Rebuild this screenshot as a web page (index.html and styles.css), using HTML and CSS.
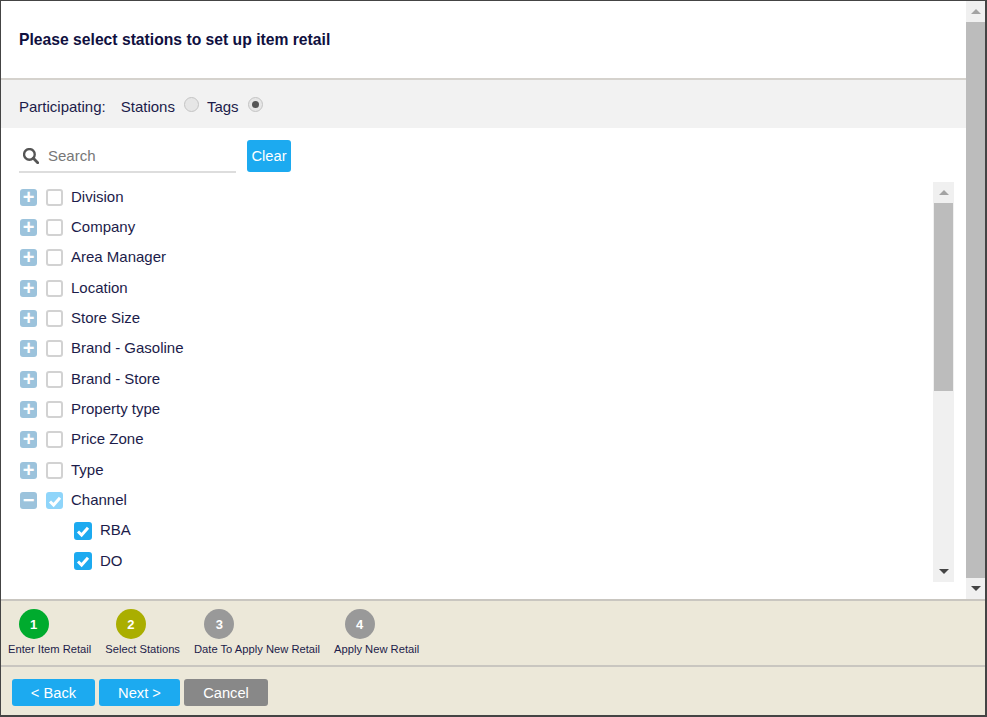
FILE: index.html
```html
<!DOCTYPE html>
<html lang="en">
<head>
<meta charset="utf-8">
<title>Select stations</title>
<link rel="stylesheet" href="styles.css">
</head>
<body>
<div class="window">
  <div class="upper">
    <main class="main">
      <header class="title-bar"><h1>Please select stations to set up item retail</h1></header>
      <div class="participating">
        <span class="part-label">Participating:</span>
        <span class="part-opt">Stations</span><span class="radio"></span>
        <span class="part-opt tags">Tags</span><span class="radio on"></span>
      </div>
      <div class="search-row">
        <div class="search">
          <svg class="search-icon" viewBox="0.8 0.8 15 15" width="16" height="16"><circle cx="6.8" cy="6.8" r="5" fill="none" stroke="#555" stroke-width="2.2"/><path d="M10.5 10.5 L14.6 14.6" stroke="#555" stroke-width="2.6" stroke-linecap="round"/></svg>
          <span class="placeholder">Search</span>
        </div>
        <button class="btn blue clear">Clear</button>
      </div>
      <div class="tree-wrap">
        <ul class="tree">
          <li class="row"><span class="exp">+</span><span class="cb"></span><span class="label">Division</span></li>
          <li class="row"><span class="exp">+</span><span class="cb"></span><span class="label">Company</span></li>
          <li class="row"><span class="exp">+</span><span class="cb"></span><span class="label">Area Manager</span></li>
          <li class="row"><span class="exp">+</span><span class="cb"></span><span class="label">Location</span></li>
          <li class="row"><span class="exp">+</span><span class="cb"></span><span class="label">Store Size</span></li>
          <li class="row"><span class="exp">+</span><span class="cb"></span><span class="label">Brand - Gasoline</span></li>
          <li class="row"><span class="exp">+</span><span class="cb"></span><span class="label">Brand - Store</span></li>
          <li class="row"><span class="exp">+</span><span class="cb"></span><span class="label">Property type</span></li>
          <li class="row"><span class="exp">+</span><span class="cb"></span><span class="label">Price Zone</span></li>
          <li class="row"><span class="exp">+</span><span class="cb"></span><span class="label">Type</span></li>
          <li class="row"><span class="exp minus">−</span><span class="cb partial"><svg viewBox="0 0 18 18" width="18" height="18"><path d="M4 9.5 L7.6 13 L14 5.8" fill="none" stroke="#fff" stroke-width="3"/></svg></span><span class="label">Channel</span></li>
          <li class="row child"><span class="cb checked"><svg viewBox="0 0 18 18" width="18" height="18"><path d="M4 9.5 L7.6 13 L14 5.8" fill="none" stroke="#fff" stroke-width="3"/></svg></span><span class="label">RBA</span></li>
          <li class="row child"><span class="cb checked"><svg viewBox="0 0 18 18" width="18" height="18"><path d="M4 9.5 L7.6 13 L14 5.8" fill="none" stroke="#fff" stroke-width="3"/></svg></span><span class="label">DO</span></li>
        </ul>
        <div class="sb inner-sb">
          <div class="sb-btn"><span class="arrow up"></span></div>
          <div class="sb-track"><div class="sb-thumb"></div></div>
          <div class="sb-btn"><span class="arrow down"></span></div>
        </div>
      </div>
    </main>
    <div class="sb outer-sb">
      <div class="sb-btn"><span class="arrow up"></span></div>
      <div class="sb-thumb fill"></div>
      <div class="sb-btn"><span class="arrow down"></span></div>
    </div>
  </div>
  <footer class="footer">
    <div class="steps">
      <div class="step"><span class="dot green">1</span><span class="step-label">Enter Item Retail</span></div>
      <div class="step"><span class="dot olive">2</span><span class="step-label">Select Stations</span></div>
      <div class="step"><span class="dot grey">3</span><span class="step-label">Date To Apply New Retail</span></div>
      <div class="step"><span class="dot grey">4</span><span class="step-label">Apply New Retail</span></div>
    </div>
    <div class="actions">
      <button class="btn blue back">&lt; Back</button>
      <button class="btn blue next">Next &gt;</button>
      <button class="btn cancel">Cancel</button>
    </div>
  </footer>
</div>
</body>
</html>
```
FILE: styles.css
```css
* { box-sizing: border-box; }
html, body { margin: 0; padding: 0; background: #fff; }
body { font-family: "Liberation Sans", Arial, sans-serif; color: #1c1c4a; overflow: hidden; }
.window { width: 987px; height: 717px; display: flex; flex-direction: column; border-top: 1px solid #444; border-left: 1px solid #444; border-right: 2px solid #444; border-bottom: 2px solid #444; }
.upper { display: flex; height: 598px; flex: none; }
.main { width: 965px; flex: none; display: flex; flex-direction: column; }
.title-bar { height: 79px; flex: none; display: flex; align-items: center; padding: 0 18px; border-bottom: 2px solid #d5d2cd; }
.title-bar h1 { margin: 0; font-size: 15.7px; font-weight: 700; color: #10103f; }
.participating { height: 48px; flex: none; background: #f2f2f2; display: flex; align-items: center; padding: 4px 0 0 18px; font-size: 15px; }
.part-label { margin-right: 15px; }
.part-opt { margin-right: 9px; }
.part-opt.tags { margin-left: 8px; margin-right: 9px; }
.radio { width: 15px; height: 15px; border-radius: 50%; background: #e6e6e6; border: 1px solid #c4c4c4; margin-bottom: 3px; position: relative; }
.radio.on::after { content: ""; position: absolute; left: 3px; top: 3px; width: 7px; height: 7px; border-radius: 50%; background: #555; }
.search-row { height: 54px; flex: none; display: flex; padding: 12px 0 0 18px; }
.search { width: 217px; height: 33px; border-bottom: 2px solid #ddd; display: flex; align-items: center; padding-left: 4px; }
.search-icon { margin-right: 9px; flex: none; }
.placeholder { color: #777; font-size: 15px; }
.btn { border: none; border-radius: 3px; color: #fff; font-family: inherit; font-size: 14.7px; padding: 0; }
.blue { background: #1caaf0; }
.clear { width: 44px; height: 32px; margin-left: 11px; padding-bottom: 1px; }
.tree-wrap { flex: 1; display: flex; min-height: 0; padding-bottom: 17px; }
.tree { list-style: none; margin: 0; padding: 0 0 0 19px; width: 932px; flex: none; }
.row { height: 30.33px; display: flex; align-items: center; font-size: 15px; }
.label { margin-bottom: 2px; }
.exp { width: 17px; height: 17px; margin-right: 9px; border-radius: 3px; background: #9cc3dc; color: #fff; font-weight: 700; font-size: 20px; line-height: 16px; text-align: center; }
.cb { width: 17px; height: 17px; margin-right: 8px; border-radius: 3px; border: 2px solid #d2d2d2; background: #fff; flex: none; position: relative; }
.cb svg { position: absolute; left: -2px; top: -2px; }
.cb.partial { background: #8fd5fa; border-color: #8fd5fa; }
.cb.checked { width: 18px; height: 18px; background: #1caaf0; border-color: #1caaf0; }
.child { padding-left: 54px; }
.sb { display: flex; flex-direction: column; background: #f0f0f0; }
.inner-sb { width: 21px; height: 400px; flex: none; }
.outer-sb { width: 19px; flex: none; }
.sb-btn { height: 21px; flex: none; display: flex; align-items: center; justify-content: center; background: #f0f0f0; }
.sb-track { flex: 1; padding: 0 1px; min-height: 0; }
.sb-thumb { height: 188px; background: #bcbcbc; }
.sb-thumb.fill { flex: 1; height: auto; }
.arrow { width: 0; height: 0; border-left: 5px solid transparent; border-right: 5px solid transparent; }
.arrow.up { border-bottom: 5px solid #a3a3a3; }
.arrow.down { border-top: 5px solid #444; }
.footer { flex: 1; background: #ece8d9; display: flex; flex-direction: column; border-top: 2px solid #c9c6c0; }
.steps { height: 66px; flex: none; display: flex; gap: 14px; padding: 8px 0 0 7px; border-bottom: 2px solid #c9c6c0; }
.step { display: flex; flex-direction: column; }
.dot { width: 30px; height: 30px; margin-left: 10.5px; border-radius: 50%; color: #fff; font-weight: 700; font-size: 13px; display: flex; align-items: center; justify-content: center; }
.green { background: #00ab2e; }
.olive { background: #aaae00; }
.grey { background: #999; }
.step-label { font-size: 11.2px; margin-top: 4px; white-space: nowrap; }
.actions { display: flex; gap: 4px; padding: 12px 0 0 11px; }
.actions .btn { height: 27px; }
.back { width: 83px; }
.next { width: 81px; }
.cancel { width: 84px; background: #888; }
```
